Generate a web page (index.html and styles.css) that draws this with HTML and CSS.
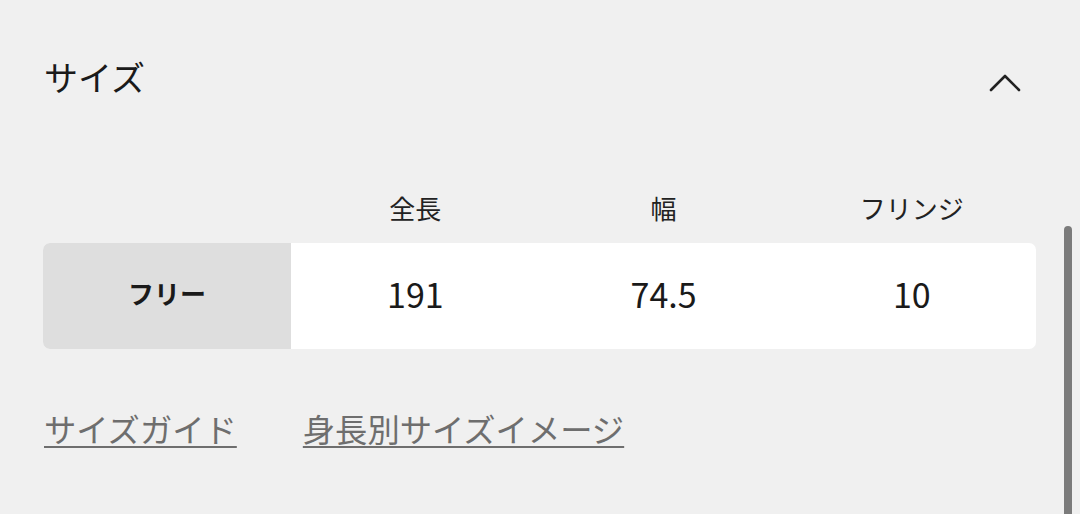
FILE: index.html
```html
<!DOCTYPE html>
<html lang="ja">
<head>
<meta charset="utf-8">
<link rel="stylesheet" href="styles.css">
</head>
<body>
<div class="page">
  <div class="head">
    <h2 class="title">サイズ</h2>
    <svg class="chev" width="32" height="20" viewBox="0 0 32 20"><path d="M2 18 L16 4 L30 18" fill="none" stroke="#222" stroke-width="2.6" stroke-linecap="round" stroke-linejoin="round"/></svg>
  </div>
  <div class="cols">
    <div></div>
    <div>全長</div>
    <div>幅</div>
    <div>フリンジ</div>
  </div>
  <div class="row">
    <div class="cell label">フリー</div>
    <div class="cell">191</div>
    <div class="cell">74.5</div>
    <div class="cell">10</div>
  </div>
  <div class="links">
    <a class="link" href="#">サイズガイド</a>
    <a class="link" href="#">身長別サイズイメージ</a>
  </div>
</div>
<div class="scrollbar"></div>
</body>
</html>
```
FILE: styles.css
```css
html, body {
  margin: 0;
  padding: 0;
  background: #f0f0f0;
  height: 514px;
  overflow: hidden;
}
body {
  font-family: "Noto Sans CJK JP", "Noto Sans", sans-serif;
  color: #1a1a1a;
}
.page {
  padding: 0 44px 0 43px;
}
.head {
  height: 156px;
  display: flex;
  justify-content: space-between;
  align-items: center;
}
.title {
  margin: 0;
  font-size: 34px;
  font-weight: 400;
  line-height: 40px;
  margin-top: -2px;
  margin-left: 1px;
}
.chev {
  margin-right: 15px;
  margin-top: 8px;
}
.cols {
  display: grid;
  grid-template-columns: repeat(4, 1fr);
  font-size: 26px;
  line-height: 26px;
  padding-top: 39px;
  padding-bottom: 22px;
  text-align: center;
  color: #222;
}
.row {
  display: grid;
  grid-template-columns: repeat(4, 1fr);
  height: 106px;
  background: #fff;
  border-radius: 7px;
  overflow: hidden;
}
.cell {
  display: flex;
  align-items: center;
  justify-content: center;
  font-size: 34px;
  color: #1a1a1a;
  padding-bottom: 6px;
}
.label {
  background: #dedede;
  font-size: 26px;
  font-weight: 700;
  padding-bottom: 8px;
}
.links {
  display: flex;
  gap: 65px;
  margin-top: 59px;
  line-height: 40px;
}
.link {
  font-size: 32.3px;
  color: #6e6e6e;
  text-decoration: underline;
  text-decoration-thickness: 2px;
  text-underline-offset: 4px;
  margin-left: 1px;
}
.scrollbar {
  position: absolute;
  left: 1064px;
  top: 226px;
  width: 8px;
  height: 300px;
  border-radius: 4px;
  background: #7b7b7b;
}
```
